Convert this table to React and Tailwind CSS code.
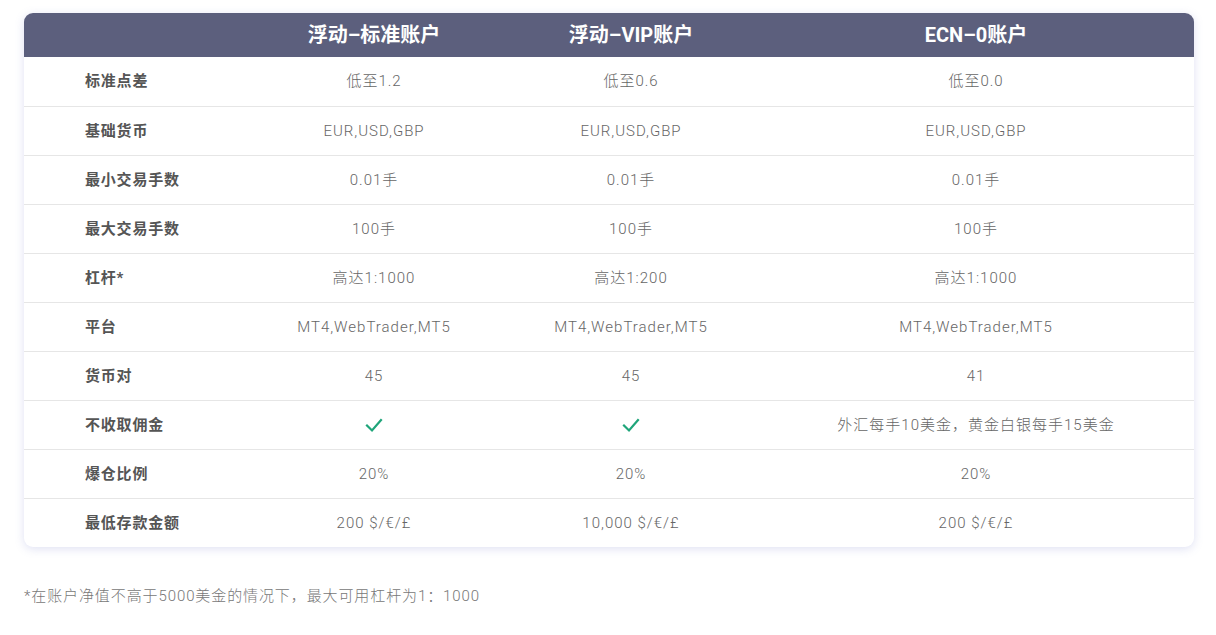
import React from "react";

const rows = [
  ["标准点差", "低至1.2", "低至0.6", "低至0.0"],
  ["基础货币", "EUR,USD,GBP", "EUR,USD,GBP", "EUR,USD,GBP"],
  ["最小交易手数", "0.01手", "0.01手", "0.01手"],
  ["最大交易手数", "100手", "100手", "100手"],
  ["杠杆*", "高达1:1000", "高达1:200", "高达1:1000"],
  ["平台", "MT4,WebTrader,MT5", "MT4,WebTrader,MT5", "MT4,WebTrader,MT5"],
  ["货币对", "45", "45", "41"],
  ["不收取佣金", "CHECK", "CHECK", "外汇每手10美金，黄金白银每手15美金"],
  ["爆仓比例", "20%", "20%", "20%"],
  ["最低存款金额", "200 $/€/£", "10,000 $/€/£", "200 $/€/£"],
];

function Check() {
  return (
    <svg width="18" height="16" viewBox="0 0 18 16" fill="none">
      <path d="M2 8.5 L7 13.5 L16 3" stroke="#1fa57a" strokeWidth="2.2" strokeLinecap="square" />
    </svg>
  );
}

const font = { fontFamily: 'Roboto, "Noto Sans CJK SC", sans-serif' };

export default function App() {
  return (
    <div className="w-[1216px] h-[635px] bg-white" style={font}>
      <div className="pt-[13px] px-[24px] pr-[22px]">
        <div className="w-[1170px] rounded-[9px] bg-white shadow-[0_2px_10px_rgba(110,120,200,0.22)] overflow-hidden">
          <div className="grid grid-cols-[220px_260px_254px_1fr] h-[44px] bg-[#5c5f7d] text-white text-[20px] font-bold items-center">
            <div></div>
            <div className="text-center">浮动–标准账户</div>
            <div className="text-center">浮动–VIP账户</div>
            <div className="text-center">ECN–0账户</div>
          </div>
          {rows.map((r, i) => (
            <div
              key={i}
              className={`grid grid-cols-[220px_260px_254px_1fr] h-[49px] items-center ${i > 0 ? "border-t border-[#e6e6e6]" : ""}`}
            >
              <div className="pl-[61px] text-[15px] tracking-[0.8px] font-bold text-[#555]">{r[0]}</div>
              {r.slice(1).map((v, j) => (
                <div key={j} className="flex justify-center text-[15px] tracking-[1px] font-light text-[#666]">
                  {v === "CHECK" ? <Check /> : v}
                </div>
              ))}
            </div>
          ))}
        </div>
        <div className="mt-[38px] text-[15px] tracking-[0.9px] font-light text-[#777]">
          *在账户净值不高于5000美金的情况下，最大可用杠杆为1：1000
        </div>
      </div>
    </div>
  );
}
